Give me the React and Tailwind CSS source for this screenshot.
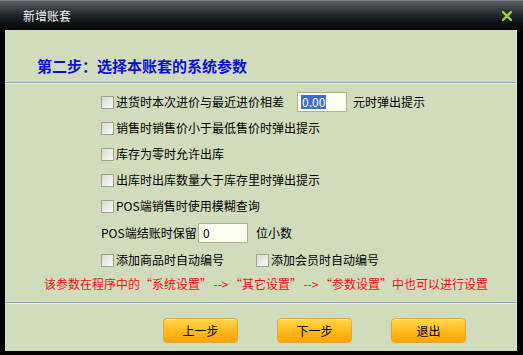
import React from "react";

const font = { fontFamily: '"Noto Sans CJK SC", "Liberation Sans", sans-serif' };

const Box = ({ className = "" }) => (
  <span className={`inline-block w-[13px] h-[13px] shrink-0 border border-[#9da393] bg-gradient-to-br from-[#dcdcd2] to-[#fbfbf6] ${className}`} />
);

const CheckRow = ({ label, className = "" }) => (
  <div className={`flex items-center h-[26px] ${className}`}>
    <Box />
    <span className="ml-[2px] text-[12px] leading-[14px] text-black">{label}</span>
  </div>
);

const Btn = ({ children }) => (
  <button className="w-[75px] h-[25px] rounded-[4px] border border-[#e0a63a] bg-gradient-to-b from-[#ffd84a] via-[#ffbb1c] to-[#ffa300] text-[12px] leading-[14px] text-black shadow-[inset_0_1px_0_#ffe98a]">
    {children}
  </button>
);

// full-width quote cells, like the original bitmap font
const Lq = () => <span className="inline-block w-[12px] text-right">“</span>;
const Rq = () => <span className="inline-block w-[12px] text-left">”</span>;
const Arrow = () => <span className="inline-block w-[18px] text-center">--&gt;</span>;

export default function App() {
  return (
    <div className="w-[523px] h-[355px] bg-black flex flex-col" style={font}>
      {/* title bar */}
      <div className="h-[30px] flex items-center justify-between bg-gradient-to-b from-[#5b6068] via-[#1e2328] to-[#050607] border-t border-[#7a8088]">
        <span className="ml-[23px] text-[12px] leading-[14px] text-[#eef0f2]">新增账套</span>
        <svg width="10" height="10" viewBox="0 0 10 10" className="mr-[11px]">
          <path d="M1 1 L9 9 M9 1 L1 9" stroke="#9ccf3a" strokeWidth="2.4" strokeLinecap="square" />
        </svg>
      </div>

      <div className="flex-1 ml-[5px] mr-[6px] mb-[4px] bg-[#d1dcbd] flex flex-col border-r border-[#e4ead8]">
        <div className="h-[52px] pt-[23px] pl-[32px]">
          <span className="text-[15px] leading-[18px] font-bold text-[#0a10d8]">第二步：选择本账套的系统参数</span>
        </div>
        <div className="h-px bg-[#8ea5ba]" />
        <div className="h-px bg-[#e6ecdc]" />

        <div className="pt-[5px] pl-[96px] flex flex-col">
          <div className="flex items-center h-[26px]">
            <Box />
            <span className="ml-[2px] w-[181px] text-[12px] leading-[14px] text-black">进货时本次进价与最近进价相差</span>
            <div className="w-[50px] h-[20px] border border-[#aab48e] bg-[#fffff2] flex items-center pl-[3px]">
              <span className="bg-[#3a6cd6] text-white text-[12px] leading-[14px] px-px">0.00</span>
            </div>
            <span className="ml-[6px] text-[12px] leading-[14px] text-black">元时弹出提示</span>
          </div>
          <CheckRow label="销售时销售价小于最低售价时弹出提示" />
          <CheckRow label="库存为零时允许出库" />
          <CheckRow label="出库时出库数量大于库存里时弹出提示" />
          <CheckRow label="POS端销售时使用模糊查询" />
          <div className="flex items-center h-[28px]">
            <span className="w-[97px] text-[12px] leading-[14px] text-black">POS端结账时保留</span>
            <div className="w-[50px] h-[20px] border border-[#aab48e] bg-[#fffff2] flex items-center pl-[4px]">
              <span className="text-[12px] leading-[14px] text-black">0</span>
            </div>
            <span className="ml-[8px] text-[12px] leading-[14px] text-black">位小数</span>
          </div>
          <div className="flex items-center h-[26px]">
            <Box />
            <span className="ml-[2px] text-[12px] leading-[14px] text-black whitespace-nowrap">添加商品时自动编号</span>
            <Box className="ml-[32px]" />
            <span className="ml-[2px] text-[12px] leading-[14px] text-black whitespace-nowrap">添加会员时自动编号</span>
          </div>
        </div>

        <div className="h-[22px] flex items-center pl-[39px]">
          <span className="text-[12px] leading-[14px] text-[#f01010] whitespace-nowrap">
            该参数在程序中的<Lq />系统设置<Rq /><Arrow /><Lq />其它设置<Rq /><Arrow /><Lq />参数设置<Rq />中也可以进行设置
          </span>
        </div>

        <div className="mt-[7px] h-px bg-[#8ea5ba]" />
        <div className="h-px bg-[#e6ecdc]" />

        <div className="pt-[14px] pl-[158px] flex gap-[39px]">
          <Btn>上一步</Btn>
          <Btn>下一步</Btn>
          <Btn>退出</Btn>
        </div>
      </div>
    </div>
  );
}
